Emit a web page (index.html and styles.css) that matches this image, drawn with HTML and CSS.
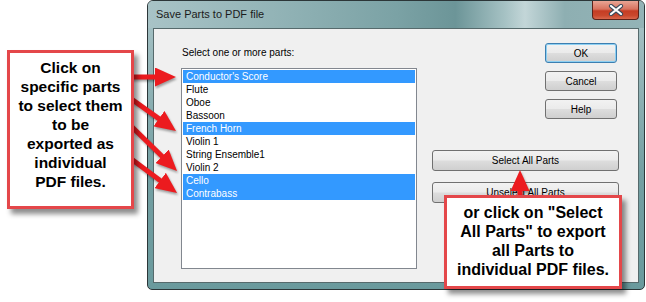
FILE: index.html
```html
<!DOCTYPE html>
<html lang="en">
<head>
    <meta charset="UTF-8">
    <title>Save Parts to PDF file</title>
    <link rel="stylesheet" href="styles.css">
</head>
<body>
<div class="stage">
    <div class="window">
        <div class="titlebar">
            <span class="title">Save Parts to PDF file</span>
            <div class="close-btn">
                <svg width="16" height="12" viewBox="0 0 16 12">
                    <path d="M3 2 L13 10 M13 2 L3 10" stroke="#3b4a5a" stroke-width="4.2" stroke-linecap="round"/>
                    <path d="M3 2 L13 10 M13 2 L3 10" stroke="#ffffff" stroke-width="2.2" stroke-linecap="round"/>
                </svg>
            </div>
        </div>
        <div class="client">
            <div class="parts-col">
                <div class="label">Select one or more parts:</div>
                <ul class="parts-list">
                    <li class="selected">Conductor's Score</li>
                    <li>Flute</li>
                    <li>Oboe</li>
                    <li>Bassoon</li>
                    <li class="selected">French Horn</li>
                    <li>Violin 1</li>
                    <li>String Ensemble1</li>
                    <li>Violin 2</li>
                    <li class="selected">Cello</li>
                    <li class="selected">Contrabass</li>
                </ul>
            </div>
            <div class="button-col">
                <button class="btn small default">OK</button>
                <button class="btn small">Cancel</button>
                <button class="btn small last">Help</button>
                <button class="btn wide">Select All Parts</button>
                <button class="btn wide">Unselect All Parts</button>
            </div>
        </div>
    </div>

    <!-- red pointer arrows -->
    <svg class="arrows" width="646" height="302" viewBox="0 0 646 302">
        <defs>
            <marker id="head" markerUnits="userSpaceOnUse" markerWidth="21" markerHeight="19" refX="5" refY="9.5" orient="auto">
                <path d="M0 0 L21 9.5 L0 19 Z" fill="#ec1b1f"/>
            </marker>
        </defs>
        <g stroke="#ec1b1f" stroke-width="5" marker-end="url(#head)">
            <line x1="130" y1="77" x2="160" y2="77"/>
            <line x1="130" y1="98" x2="163" y2="121.6"/>
            <line x1="130" y1="125" x2="165.6" y2="159.8"/>
            <line x1="130" y1="158" x2="164.2" y2="183.4"/>
            <line x1="520" y1="198" x2="520" y2="186"/>
        </g>
    </svg>

    <div class="callout callout-parts">
        Click on<br>specific parts<br>to select them<br>to be<br>exported as<br>individual<br>PDF files.
    </div>
    <div class="callout callout-all">
        or click on "Select<br>All Parts" to export<br>all Parts to<br>individual PDF files.
    </div>
</div>
</body>
</html>
```

FILE: styles.css
```css
body {
    margin: 0;
    background-color: #ffffff;
    font-family: "Liberation Sans", Arial, sans-serif;
}
.stage {
    position: relative;
    width: 646px;
    height: 302px;
    overflow: hidden;
}
.window {
    margin-left: 147px;
    width: 498px;
    height: 290px;
    box-sizing: border-box;
    border: 1px solid #2c3638;
    border-radius: 6px 6px 5px 5px;
    padding: 0 5px 6px 5px;
    background: linear-gradient(180deg, #aac5c8 0%, #94b5b8 25%, #739fa2 60%, #6a9a9d 100%);
}
.titlebar {
    height: 27px;
    display: flex;
    justify-content: space-between;
    align-items: flex-start;
    margin: 0 -5px;
    border-radius: 5px 5px 0 0;
    background: linear-gradient(90deg, #a8c3c6 0%, #93b4b7 25%, #7ba2a5 50%, #6c9598 62%, #a6c2c4 72%, #c3d6d8 76%, #8eafb2 84%, #93b3b6 100%);
}
.title {
    margin: 7px 0 0 8px;
    font-size: 11px;
    line-height: 13px;
    color: #1b1b1b;
}
.close-btn {
    width: 47px;
    height: 19px;
    margin-right: 5px;
    box-sizing: border-box;
    border: 1px solid #5c2219;
    border-top: none;
    border-radius: 0 0 4px 4px;
    background: linear-gradient(#e9a594 0%, #d8735f 45%, #c53d24 55%, #c9472c 80%, #d9674c 100%);
    display: flex;
    align-items: center;
    justify-content: center;
}
.client {
    height: 255px;
    box-sizing: border-box;
    border: 1px solid #566a6c;
    background-color: #f0f0f0;
    display: flex;
    gap: 15px;
    padding: 14px 0 0 27px;
    font-size: 10px;
}
.parts-col {
    width: 236px;
}
.label {
    margin: 3px 0 0 1px;
    line-height: 13px;
    color: #000;
}
.parts-list {
    list-style: none;
    margin: 9px 0 0 0;
    padding: 1px;
    height: 201px;
    box-sizing: border-box;
    border: 1px solid #82878f;
    background-color: #ffffff;
}
.parts-list li {
    height: 13px;
    line-height: 13px;
    padding-left: 3px;
    color: #000;
}
.parts-list li.selected {
    background-color: #3399ff;
    color: #ffffff;
}
.button-col {
    width: 187px;
    display: flex;
    flex-direction: column;
    align-items: flex-end;
}
.btn {
    font-family: "Liberation Sans", Arial, sans-serif;
    font-size: 10px;
    color: #000;
    box-sizing: border-box;
    border: 1px solid #707070;
    border-radius: 3px;
    background: linear-gradient(#f2f2f2 0%, #ebebeb 48%, #dddddd 52%, #cfcfcf 100%);
    padding: 0;
}
.btn.small {
    width: 72px;
    height: 20px;
    margin: 0 2px 8px 0;
}
.btn.small.last {
    margin-bottom: 31px;
}
.btn.default {
    border-color: #3c7fb1;
    box-shadow: inset 0 0 0 1px #8ed0f2;
}
.btn.wide {
    width: 187px;
    height: 21px;
    margin-bottom: 11px;
}
.arrows {
    position: absolute;
    left: 0;
    top: 0;
    filter: drop-shadow(1px 2px 1px rgba(0, 0, 0, 0.35));
}
.callout {
    position: absolute;
    box-sizing: border-box;
    background-color: #ffffff;
    border: 3px solid #e4474a;
    box-shadow: 4px 5px 5px rgba(0, 0, 0, 0.45);
    text-align: center;
    font-weight: bold;
    color: #000;
}
.callout-parts {
    left: 7px;
    top: 50px;
    width: 127px;
    height: 159px;
    padding-top: 5px;
    font-size: 15.5px;
    line-height: 19px;
}
.callout-all {
    left: 444px;
    top: 195px;
    width: 178px;
    height: 94px;
    padding-top: 5px;
    font-size: 16px;
    line-height: 19px;
}
```
